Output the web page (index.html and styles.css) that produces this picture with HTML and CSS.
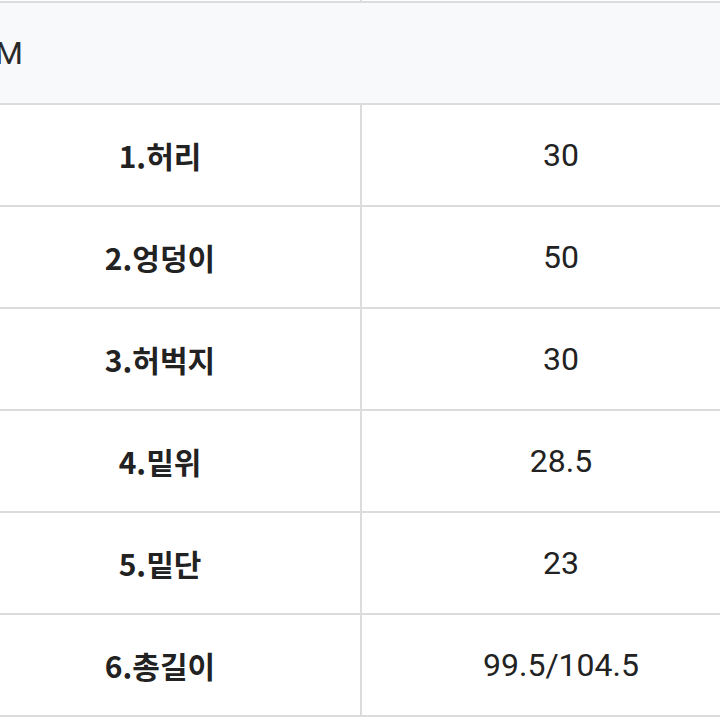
FILE: index.html
```html
<!DOCTYPE html>
<html lang="ko">
<head>
<meta charset="utf-8">
<link rel="stylesheet" href="styles.css">
</head>
<body>
<div class="table">
  <div class="row">
    <div class="cell label"></div>
    <div class="cell value"></div>
  </div>
  <div class="row head">
    <div class="cell full">M</div>
  </div>
  <div class="row">
    <div class="cell label">1.허리</div>
    <div class="cell value">30</div>
  </div>
  <div class="row">
    <div class="cell label">2.엉덩이</div>
    <div class="cell value">50</div>
  </div>
  <div class="row">
    <div class="cell label">3.허벅지</div>
    <div class="cell value">30</div>
  </div>
  <div class="row">
    <div class="cell label">4.밑위</div>
    <div class="cell value">28.5</div>
  </div>
  <div class="row">
    <div class="cell label">5.밑단</div>
    <div class="cell value">23</div>
  </div>
  <div class="row">
    <div class="cell label">6.총길이</div>
    <div class="cell value">99.5/104.5</div>
  </div>
</div>
</body>
</html>
```

FILE: styles.css
```css
html, body {
  margin: 0;
  padding: 0;
  background: #ffffff;
  overflow: hidden;
}

.table {
  width: 800px;
  margin-left: -40px;
  margin-top: -99px;
}

.row {
  display: flex;
  height: 100px;
  border-bottom: 2px solid #dcdcdc;
}

.row.head {
  background: #f8f9fa;
}

.cell {
  display: flex;
  align-items: center;
  color: #222222;
}

.label {
  width: 400px;
  border-right: 2px solid #dcdcdc;
  justify-content: center;
  font-family: "Noto Sans CJK KR", "Noto Sans", sans-serif;
  font-weight: 700;
  font-size: 30px;
}

.value {
  flex: 1;
  justify-content: center;
  font-family: Roboto, "Noto Sans CJK KR", sans-serif;
  font-size: 32px;
}

.full {
  flex: 1;
  padding-left: 35px;
  font-family: Roboto, sans-serif;
  font-size: 32px;
  color: #2a2a2a;
}
```
